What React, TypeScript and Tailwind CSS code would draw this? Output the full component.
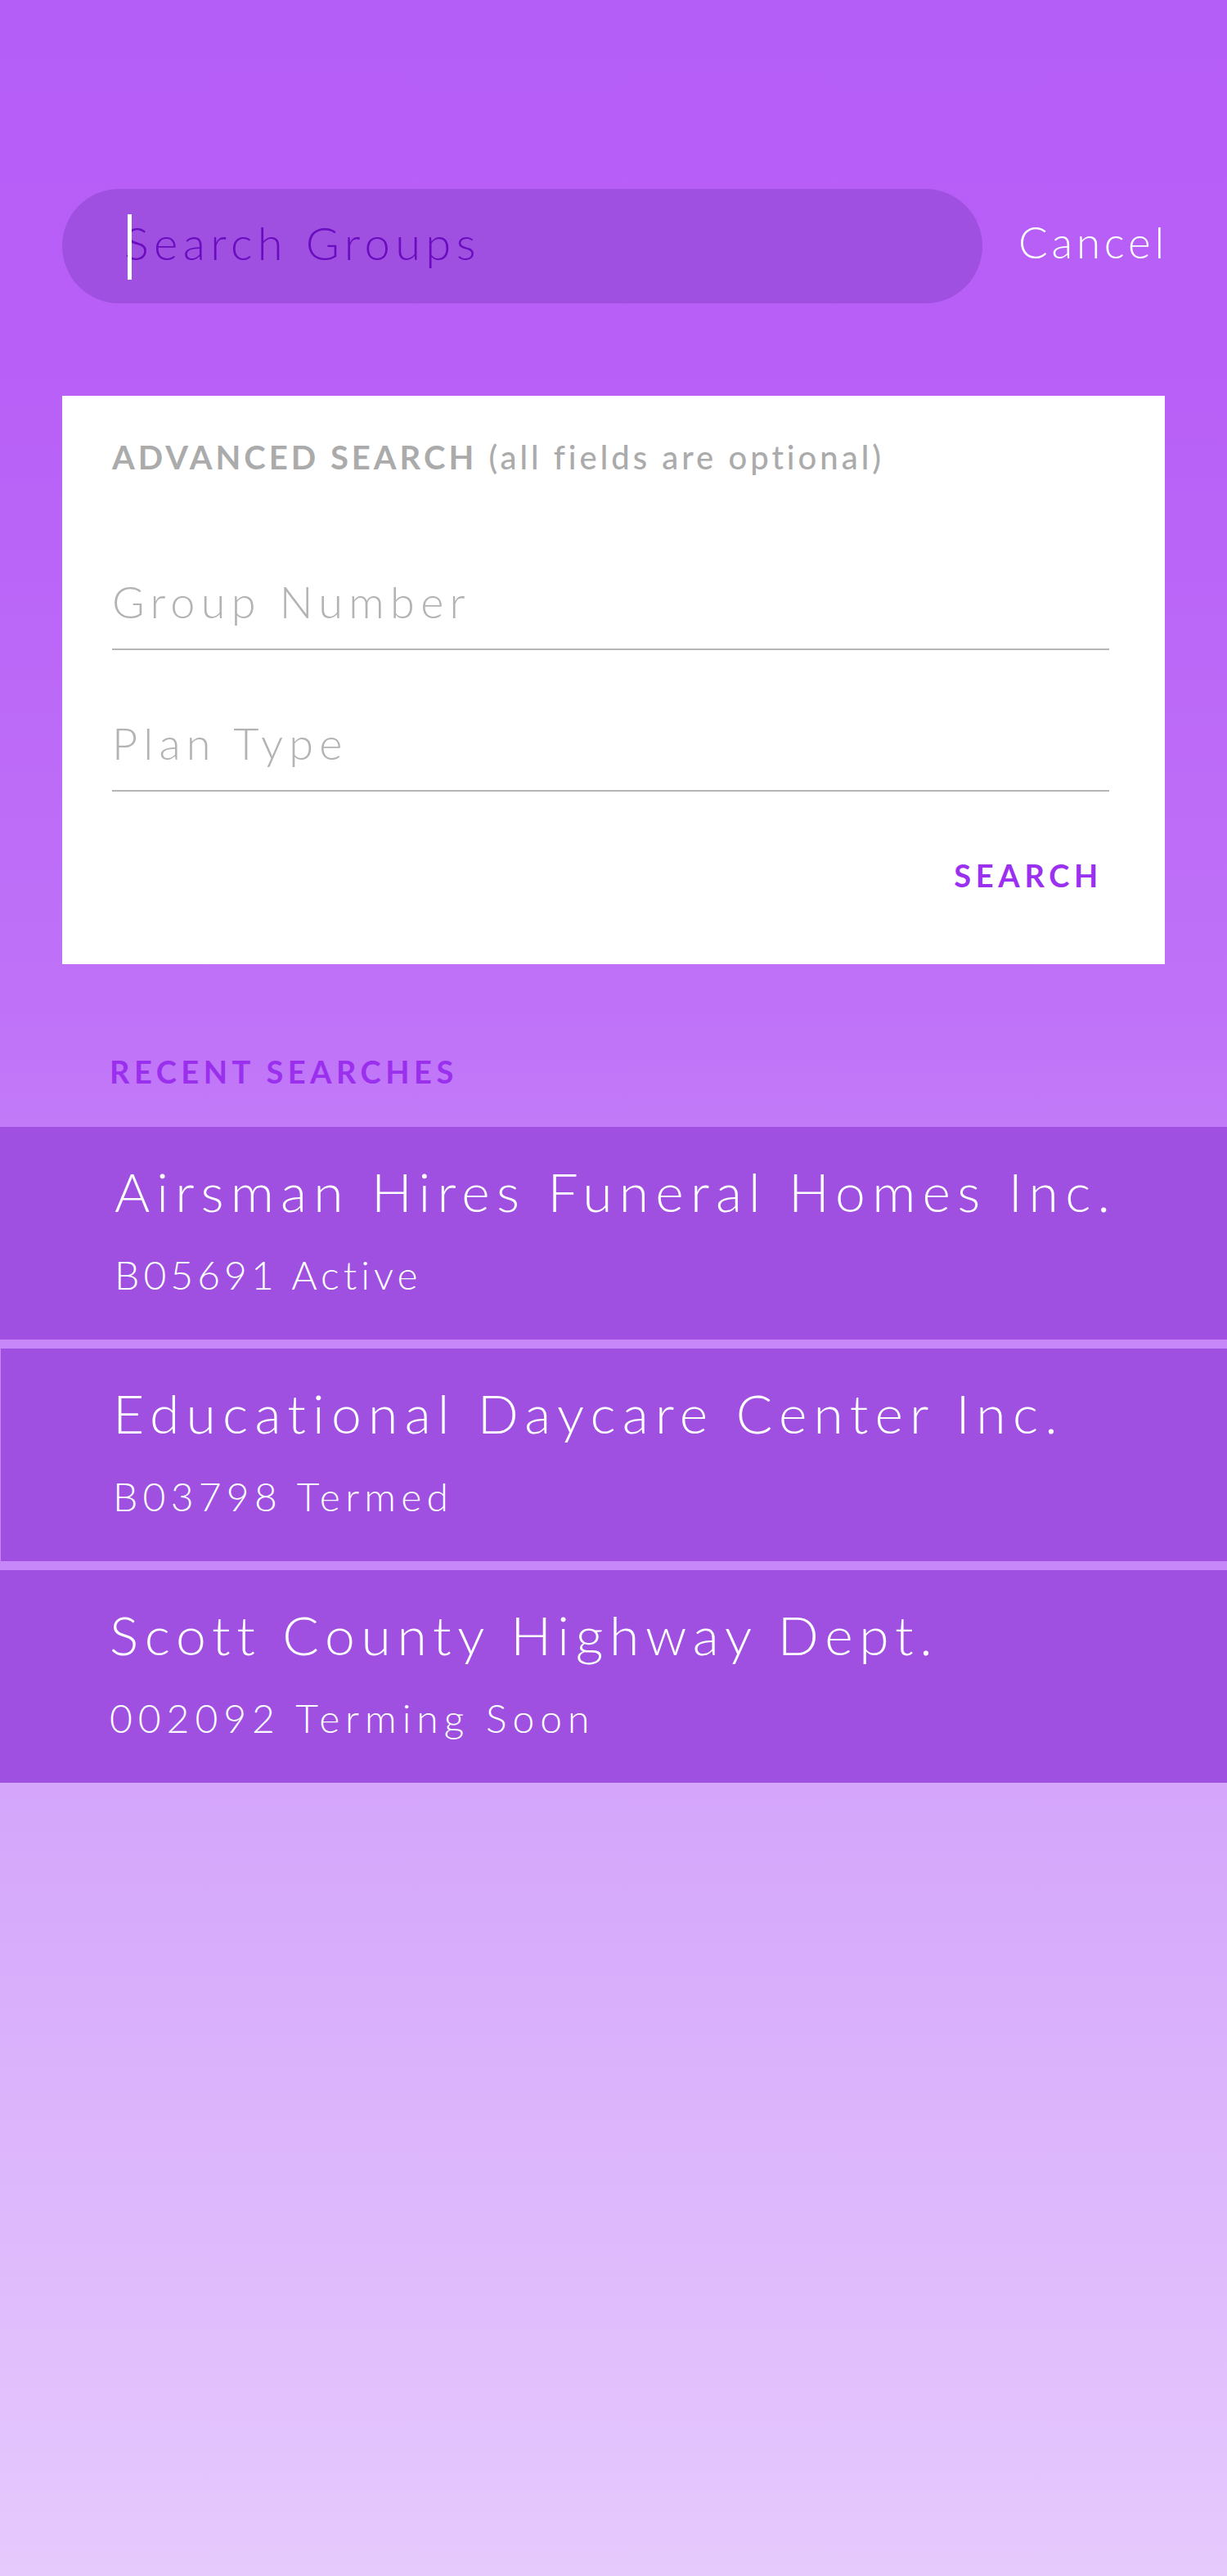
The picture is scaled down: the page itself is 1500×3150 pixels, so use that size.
import React from 'react';

interface RecentSearch {
  name: string;
  meta: string;
  pad: string;
  nameTracking: string;
  metaTracking: string;
  extra?: string;
}

const recentSearches: RecentSearch[] = [
  {
    name: 'Airsman Hires Funeral Homes Inc.',
    meta: 'B05691 Active',
    pad: 'pl-[140px]',
    nameTracking: 'tracking-[0.125em]',
    metaTracking: 'tracking-[0.105em]',
  },
  {
    name: 'Educational Daycare Center Inc.',
    meta: 'B03798 Termed',
    pad: 'pl-[137px]',
    nameTracking: 'tracking-[0.125em]',
    metaTracking: 'tracking-[0.13em]',
    extra: 'border-l border-[#c887f9]',
  },
  {
    name: 'Scott County Highway Dept.',
    meta: '002092 Terming Soon',
    pad: 'pl-[134px]',
    nameTracking: 'tracking-[0.117em]',
    metaTracking: 'tracking-[0.145em]',
  },
];

const UnderlineField = ({ label }: { label: string }) => (
  <div className="border-b-2 border-[#b5b5b5] pb-[30px]">
    <span className="block text-[54px] leading-none font-light tracking-[0.135em] text-[#b3b3b3]">{label}</span>
  </div>
);

const App = () => {
  return (
    <div className="min-h-[3150px] w-full bg-[linear-gradient(180deg,#b55ef7_0%,#b85ff7_14%,#bf72f8_39%,#d4a5fb_69%,#e6c9fd_100%)] font-['Lato','Liberation_Sans',sans-serif]">
      {/* Search bar + cancel */}
      <div className="flex items-center px-[76px] pt-[231px]">
        <div className="relative flex h-[140px] w-[1125px] items-center rounded-full bg-[#a050e0] pl-[76px] pb-[8px]">
          <span className="text-[56px] leading-none font-light tracking-[0.115em] text-[#6a0cc0]">Search Groups</span>
          {/* caret */}
          <div className="absolute left-[80px] top-[31px] h-[80px] w-[5px] bg-white" />
        </div>
        <button className="ml-auto -mr-[4px] pb-[12px] text-[53px] leading-none font-light tracking-[0.09em] text-white">Cancel</button>
      </div>

      {/* Advanced search card */}
      <div className="mx-[76px] mt-[113px] h-[695px] bg-white pl-[61px] pr-[68px] pt-[55px]">
        <p className="text-[40px] leading-none tracking-[0.1em] text-[#ababab]">
          <span className="font-bold">ADVANCED SEARCH</span>{' '}
          <span className="font-medium">(all fields are optional)</span>
        </p>
        <div className="mt-[130px]">
          <UnderlineField label="Group Number" />
        </div>
        <div className="mt-[87px]">
          <UnderlineField label="Plan Type" />
        </div>
        <div className="mt-[83px] flex justify-end pr-[8px]">
          <button className="text-[38px] leading-none font-bold tracking-[0.15em] text-[#9b30f0]">SEARCH</button>
        </div>
      </div>

      {/* Recent searches */}
      <p className="mt-[112px] pl-[134px] text-[38px] leading-none font-bold tracking-[0.145em] text-[#9a30ee]">RECENT SEARCHES</p>
      <div className="mt-[49px] flex flex-col gap-[11px] bg-[#c887f9]">
        {recentSearches.map((item) => (
          <div key={item.meta} className={`h-[260px] bg-[#a050e0] pt-[46px] ${item.pad} ${item.extra ?? ''}`}>
            <div className={`text-[66px] leading-none font-light text-white ${item.nameTracking}`}>{item.name}</div>
            <div className={`mt-[45px] text-[48px] leading-none font-light text-white ${item.metaTracking}`}>{item.meta}</div>
          </div>
        ))}
      </div>
    </div>
  );
};

export default App;
